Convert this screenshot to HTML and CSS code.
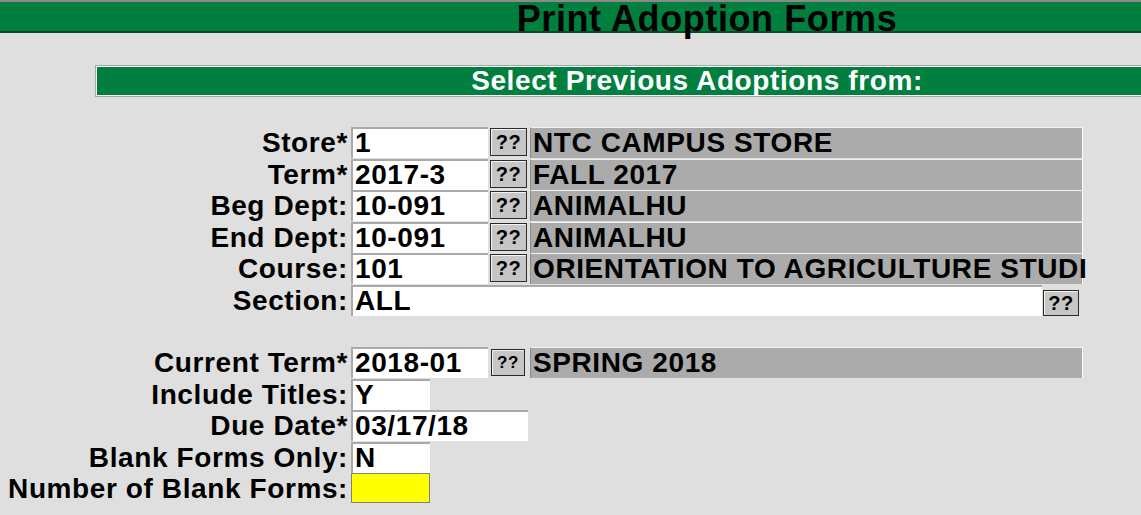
FILE: index.html
```html
<!DOCTYPE html>
<html>
<head>
<meta charset="utf-8">
<link rel="stylesheet" href="styles.css">
</head>
<body>
<div class="topline"></div>
<header class="titlebar"><h1 class="title">Print Adoption Forms</h1></header>
<div class="section"><h2 class="section-title">Select Previous Adoptions from:</h2></div>
<form class="form">
  <div class="row">
    <label class="lbl">Store*</label>
    <div class="field f-short">1</div>
    <span class="btn">??</span>
    <div class="desc">NTC CAMPUS STORE</div>
  </div>
  <div class="row">
    <label class="lbl">Term*</label>
    <div class="field f-short">2017-3</div>
    <span class="btn">??</span>
    <div class="desc">FALL 2017</div>
  </div>
  <div class="row">
    <label class="lbl">Beg Dept:</label>
    <div class="field f-short">10-091</div>
    <span class="btn">??</span>
    <div class="desc">ANIMALHU</div>
  </div>
  <div class="row">
    <label class="lbl">End Dept:</label>
    <div class="field f-short">10-091</div>
    <span class="btn">??</span>
    <div class="desc">ANIMALHU</div>
  </div>
  <div class="row">
    <label class="lbl">Course:</label>
    <div class="field f-short">101</div>
    <span class="btn">??</span>
    <div class="desc">ORIENTATION TO AGRICULTURE STUDI</div>
  </div>
  <div class="row">
    <label class="lbl">Section:</label>
    <div class="field f-long">ALL</div>
    <span class="btn btn-sec">??</span>
  </div>
  <div class="spacer"></div>
  <div class="row">
    <label class="lbl">Current Term*</label>
    <div class="field f-short">2018-01</div>
    <span class="btn btn-small">??</span>
    <div class="desc">SPRING 2018</div>
  </div>
  <div class="row">
    <label class="lbl">Include Titles:</label>
    <div class="field f-tiny">Y</div>
  </div>
  <div class="row">
    <label class="lbl">Due Date*</label>
    <div class="field f-date">03/17/18</div>
  </div>
  <div class="row">
    <label class="lbl">Blank Forms Only:</label>
    <div class="field f-tiny">N</div>
  </div>
  <div class="row">
    <label class="lbl">Number of Blank Forms:</label>
    <div class="field f-tiny f-yellow"></div>
  </div>
</form>
</body>
</html>
```
FILE: styles.css
```css
html, body {
  margin: 0;
  padding: 0;
  background: #dfdfdf;
  overflow: hidden;
}
body {
  font-family: "Liberation Sans", Arial, sans-serif;
  font-weight: bold;
  color: #000;
  letter-spacing: 0.6px;
  width: 1141px;
  height: 515px;
}
.topline {
  height: 2px;
  background: #8a8a8a;
}
.titlebar {
  height: 29px;
  background: #007f3f;
  border-bottom: 2px solid #004d1f;
  padding-left: 273px;
  text-align: center;
}
.title {
  margin: 0;
  font-size: 36px;
  line-height: 33px;
  font-weight: bold;
  white-space: nowrap;
}
.section {
  margin-top: 32px;
  margin-left: 95px;
  height: 28px;
  background: #007f3f;
  border: 1px solid #a6a6a6;
  border-right: none;
  box-shadow: inset 1px 1px 0 #ffffff, inset 0 -1px 0 #ffffff;
  padding: 1px 0 1px 157px;
  text-align: center;
}
.section-title {
  margin: 0;
  font-size: 28px;
  line-height: 28px;
  color: #fff;
  white-space: nowrap;
}
.form {
  margin-top: 30px;
  display: flex;
  flex-direction: column;
}
.row {
  display: flex;
  align-items: flex-start;
  height: 31.5px;
  font-size: 28px;
  line-height: 31px;
}
.spacer {
  height: 31px;
}
.lbl {
  width: 348px;
  text-align: right;
  white-space: nowrap;
  flex: none;
}
.field {
  box-sizing: border-box;
  margin-left: 3px;
  height: 31px;
  background: #fff;
  border-top: 2px solid #a9a9a9;
  border-left: 2px solid #a9a9a9;
  padding-left: 2px;
  line-height: 28px;
  white-space: nowrap;
  flex: none;
}
.f-short { width: 137px; }
.f-long { width: 691px; }
.f-tiny { width: 79px; }
.f-date { width: 177px; }
.f-yellow {
  background: #ffff00;
  border: 1px solid #808080;
  height: 30px;
}
.btn {
  box-sizing: border-box;
  flex: none;
  margin-left: 2px;
  margin-top: 1px;
  width: 37px;
  height: 28px;
  background: #c6c6c6;
  border: 1px solid #2a2a2a;
  box-shadow: inset 1px 1px 0 #f4f4f4;
  font-size: 20px;
  font-weight: bold;
  line-height: 26px;
  text-align: center;
  letter-spacing: 0.5px;
}
.btn-sec {
  margin-left: 1px;
  margin-top: 5px;
  height: 26px;
  width: 36px;
  line-height: 24px;
}
.btn-small {
  margin-left: 3px;
  margin-top: 2px;
  width: 34px;
  height: 27px;
  font-size: 17px;
  line-height: 25px;
}
.desc {
  box-sizing: border-box;
  flex: none;
  margin-left: 3px;
  width: 553px;
  height: 31px;
  background: #ababab;
  border-top: 1px solid #f2f2f2;
  border-right: 1px solid #ffffff;
  border-left: 1px solid #8c8c8c;
  padding-left: 2px;
  line-height: 29px;
  white-space: nowrap;
  overflow: visible;
}
.btn-small + .desc {
  margin-left: 5px;
}
```
